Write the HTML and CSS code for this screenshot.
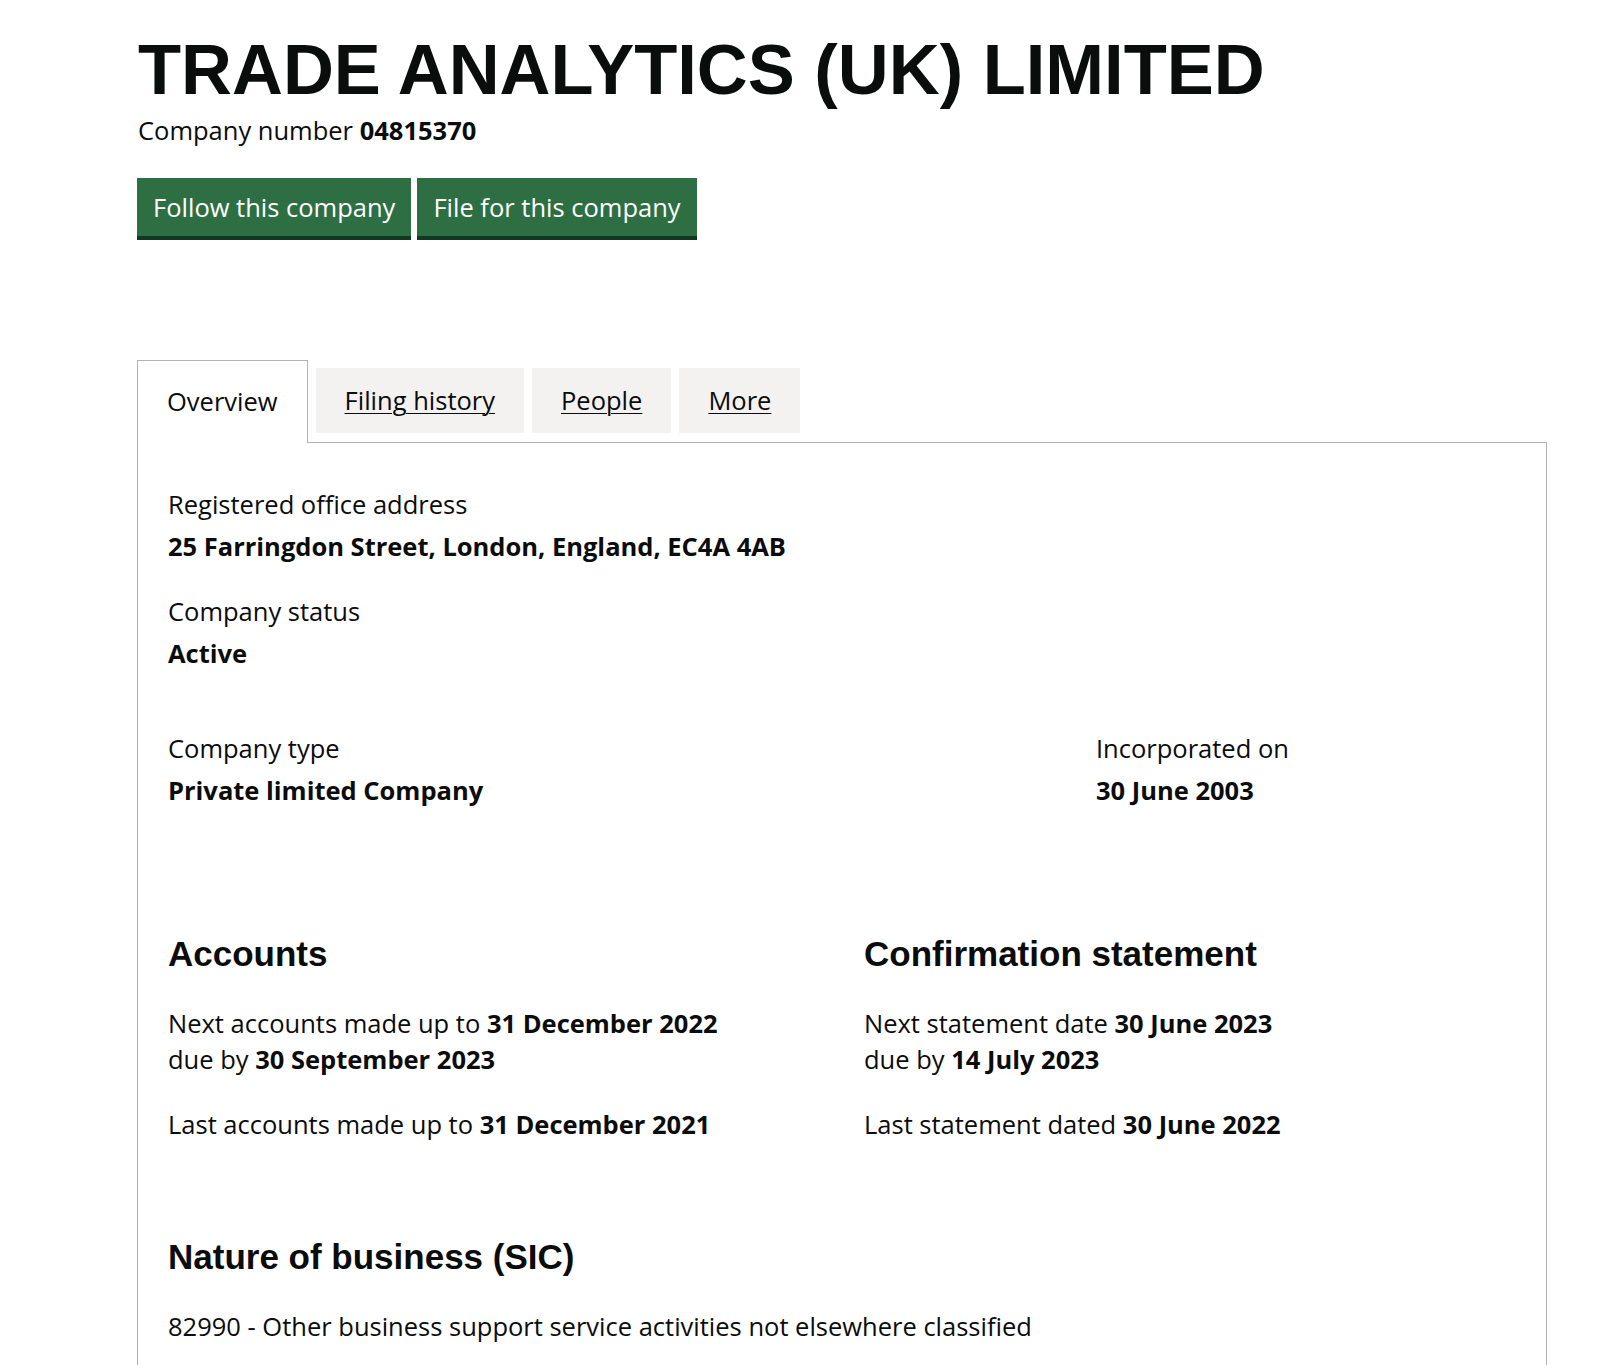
FILE: index.html
```html
<!DOCTYPE html>
<html lang="en">
<head>
  <meta charset="UTF-8" />
  <meta name="viewport" content="width=device-width, initial-scale=1" />
  <title>TRADE ANALYTICS (UK) LIMITED - Company overview</title>
  <link rel="stylesheet" href="styles.css">
</head>
<body>

<main class="page">
  <h1 class="company-name">TRADE ANALYTICS (UK) LIMITED</h1>
  <p class="company-number">Company number <strong>04815370</strong></p>

  <div class="actions">
    <a href="#" class="button">Follow this company</a>
    <a href="#" class="button">File for this company</a>
  </div>

  <nav class="tabs">
    <span class="tab selected">Overview</span>
    <a href="#" class="tab">Filing history</a>
    <a href="#" class="tab">People</a>
    <a href="#" class="tab">More</a>
  </nav>

  <section class="panel">
    <dl class="field">
      <dt>Registered office address</dt>
      <dd>25 Farringdon Street, London, England, EC4A 4AB</dd>
    </dl>

    <dl class="field">
      <dt>Company status</dt>
      <dd>Active</dd>
    </dl>

    <div class="row type-row">
      <dl class="field">
        <dt>Company type</dt>
        <dd>Private limited Company</dd>
      </dl>
      <dl class="field">
        <dt>Incorporated on</dt>
        <dd>30 June 2003</dd>
      </dl>
    </div>

    <div class="row halves">
      <div>
        <h2>Accounts</h2>
        <p>Next accounts made up to <strong>31 December 2022</strong><br>
          due by <strong>30 September 2023</strong></p>
        <p>Last accounts made up to <strong>31 December 2021</strong></p>
      </div>
      <div>
        <h2>Confirmation statement</h2>
        <p>Next statement date <strong>30 June 2023</strong><br>
          due by <strong>14 July 2023</strong></p>
        <p>Last statement dated <strong>30 June 2022</strong></p>
      </div>
    </div>

    <h2 class="sic-title">Nature of business (SIC)</h2>
    <ul class="sic">
      <li>82990 - Other business support service activities not elsewhere classified</li>
    </ul>
  </section>
</main>

</body>
</html>
```

FILE: styles.css
```css
body {
  margin: 0;
  background: #fff;
  color: #0b0c0c;
  font-family: "Open Sans", Roboto, Arial, sans-serif;
  font-size: 25.5px;
  line-height: 36px;
}
.page {
  margin-left: 137px;
  width: 1410px;
}
.company-name {
  font-family: "Liberation Sans", Arial, sans-serif;
  font-size: 70.5px;
  line-height: 80px;
  font-weight: 700;
  margin: 30px 0 0 1px;
}
.company-number {
  margin: 2px 0 0 1px;
}
.company-number strong { font-weight: 700; }

.actions {
  display: flex;
  gap: 6px;
  margin-top: 30px;
}
.button {
  display: block;
  background: #2d6f42;
  color: #fff;
  text-decoration: none;
  padding: 11px 16px;
  line-height: 36px;
  box-shadow: 0 4px 0 #0f3a1f;
}

/* Tabs */
.tabs {
  display: flex;
  align-items: flex-start;
  gap: 8px;
  margin-top: 124px;
  position: relative;
  z-index: 1;
}
.tab {
  display: block;
  color: #0b0c0c;
  padding: 14px 29px 15px;
  line-height: 36px;
  background: #f3f2f1;
  margin-top: 8px;
  text-decoration: underline;
  text-underline-offset: 3px;
  text-decoration-thickness: 1px;
}
.tab.selected {
  background: #fff;
  border: 1px solid #b1b4b6;
  border-bottom: 0;
  margin-top: 0;
  padding: 22px 29px 24px;
  text-decoration: none;
  margin-bottom: -1px;
}

.panel {
  border: 1px solid #b1b4b6;
  padding: 43px 30px 60px;
  min-height: 1000px;
}
.field {
  margin: 0 0 29px;
}
.field dt { margin: 0 0 6px; }
.field dd { margin: 0; font-weight: 700; }

.row {
  display: grid;
}
.type-row {
  grid-template-columns: 928px 1fr;
  margin-top: 59px;
}
.halves {
  grid-template-columns: 696px 1fr;
  margin-top: 97px;
}

h2 {
  font-family: "Liberation Sans", Arial, sans-serif;
  font-size: 35px;
  line-height: 40px;
  font-weight: 700;
  margin: 0 0 31px;
}
p { margin: 0 0 29px; }
strong { font-weight: 700; }

.sic-title { margin-top: 66px; margin-bottom: 31px; }
.sic {
  list-style: none;
  margin: 0;
  padding: 0;
}
```
